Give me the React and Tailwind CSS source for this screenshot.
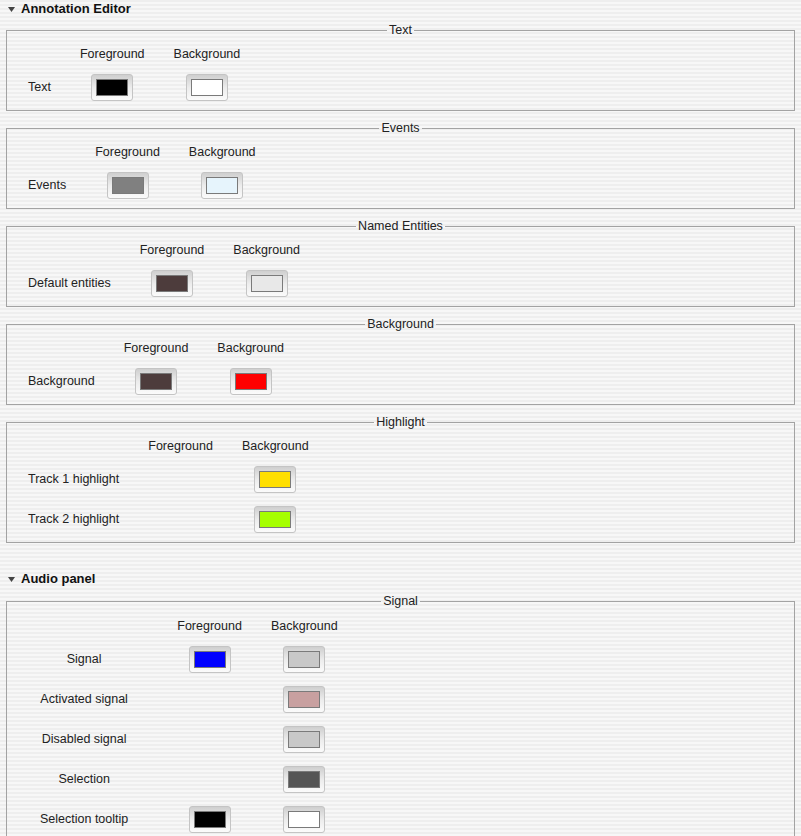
const annotationGroups = [
  {
    title: 'Text',
    rows: [{ label: 'Text', fg: 'bg-[#000000]', bg: 'bg-[#ffffff]' }],
  },
  {
    title: 'Events',
    rows: [{ label: 'Events', fg: 'bg-[#808080]', bg: 'bg-[#e6f4fc]' }],
  },
  {
    title: 'Named Entities',
    rows: [{ label: 'Default entities', fg: 'bg-[#4d3c3c]', bg: 'bg-[#e8e8e8]' }],
  },
  {
    title: 'Background',
    rows: [{ label: 'Background', fg: 'bg-[#4d3c3c]', bg: 'bg-[#ff0000]' }],
  },
  {
    title: 'Highlight',
    rows: [
      { label: 'Track 1 highlight', bg: 'bg-[#ffdf00]' },
      { label: 'Track 2 highlight', bg: 'bg-[#a6ff00]' },
    ],
  },
]

const signalRows = [
  { label: 'Signal', fg: 'bg-[#0000ff]', bg: 'bg-[#c8c8c8]' },
  { label: 'Activated signal', bg: 'bg-[#c8a0a0]' },
  { label: 'Disabled signal', bg: 'bg-[#c8c8c8]' },
  { label: 'Selection', bg: 'bg-[#555555]' },
  { label: 'Selection tooltip', fg: 'bg-[#000000]', bg: 'bg-[#ffffff]' },
]

function SectionHeader({ title }) {
  return (
    <div className="flex h-[18px] items-center pl-[8px]">
      <svg width="7" height="5" viewBox="0 0 7 5" className="mr-[6px]">
        <path d="M0 0 L7 0 L3.5 5 Z" fill="#444" />
      </svg>
      <span className="text-[13px] font-bold leading-[14px] text-[#111]">{title}</span>
    </div>
  )
}

function Swatch({ color }) {
  return (
    <div className="flex h-[27px] w-[42px] items-center justify-center justify-self-center rounded-[3px] border border-[#c4c4c4] bg-linear-to-b from-[#cfcfcf] via-[#ececec] to-[#fbfbfb]">
      <div className={`h-[17px] w-[32px] border border-[#7a7a7a] ${color}`} />
    </div>
  )
}

function ColorGroup({ title, rows, audio = false }) {
  return (
    <fieldset className="mx-[6px] border border-[#a3a3a3]">
      <legend className="mx-auto px-[2px] text-[12.5px] leading-[14px] text-[#222]">{title}</legend>
      <div
        className={
          audio
            ? 'grid grid-cols-[auto_auto_auto] items-center justify-start gap-x-[29px] gap-y-[13px] pt-[11px] pb-[10px] pl-[33px]'
            : 'grid grid-cols-[auto_auto_auto] items-center justify-start gap-x-[29px] gap-y-[13px] pt-[10px] pb-[9px] pl-[21px]'
        }
      >
        <div />
        <div className="text-center leading-[14px]">Foreground</div>
        <div className="text-center leading-[14px]">Background</div>
        {rows.map((row) => (
          <div key={row.label} className="contents">
            <div className={audio ? 'pr-[20px] text-center' : ''}>{row.label}</div>
            {row.fg ? <Swatch color={row.fg} /> : <div />}
            {row.bg ? <Swatch color={row.bg} /> : <div />}
          </div>
        ))}
      </div>
    </fieldset>
  )
}

export default function App() {
  return (
    <div className="h-[836px] w-full overflow-hidden bg-[repeating-linear-gradient(to_bottom,#eeeeee_0px,#eeeeee_2px,#f7f7f7_2px,#f7f7f7_4px)] font-['Liberation_Sans',Arial,sans-serif] text-[12.5px] text-[#222]">
      <SectionHeader title="Annotation Editor" />
      <div className="mt-[5px] flex flex-col gap-[10px]">
        {annotationGroups.map((g) => (
          <ColorGroup key={g.title} title={g.title} rows={g.rows} />
        ))}
      </div>
      <div className="mt-[27px]">
        <SectionHeader title="Audio panel" />
      </div>
      <div className="mt-[6px]">
        <ColorGroup title="Signal" rows={signalRows} audio />
      </div>
    </div>
  )
}
